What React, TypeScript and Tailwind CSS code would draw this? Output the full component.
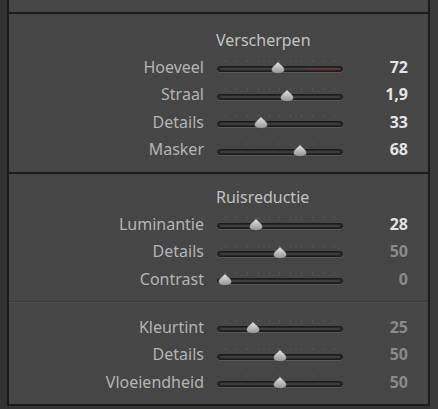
import React from 'react';

type Row = { label: string; value: string; frac: number; active: boolean; red?: boolean };

const sharpen: Row[] = [
  { label: 'Hoeveel', value: '72', frac: 0.48, active: true, red: true },
  { label: 'Straal', value: '1,9', frac: 0.56, active: true },
  { label: 'Details', value: '33', frac: 0.33, active: true },
  { label: 'Masker', value: '68', frac: 0.68, active: true },
];

const luminance: Row[] = [
  { label: 'Luminantie', value: '28', frac: 0.28, active: true },
  { label: 'Details', value: '50', frac: 0.5, active: false },
  { label: 'Contrast', value: '0', frac: 0, active: false },
];

const color: Row[] = [
  { label: 'Kleurtint', value: '25', frac: 0.25, active: false },
  { label: 'Details', value: '50', frac: 0.5, active: false },
  { label: 'Vloeiendheid', value: '50', frac: 0.5, active: false },
];

const Thumb = () => (
  <svg width="14" height="13" viewBox="0 0 14 13">
    <defs>
      <linearGradient id="thumbGrad" x1="0" y1="0" x2="0" y2="1">
        <stop offset="0" stopColor="#e8e8e8" />
        <stop offset="1" stopColor="#929292" />
      </linearGradient>
    </defs>
    <path
      d="M7 0.5 C8.2 2.8 13.5 5.3 13.5 8.6 C13.5 11.4 10.8 12.5 7 12.5 C3.2 12.5 0.5 11.4 0.5 8.6 C0.5 5.3 5.8 2.8 7 0.5 Z"
      fill="url(#thumbGrad)"
      stroke="#383838"
      strokeWidth="0.6"
    />
  </svg>
);

const Slider = ({ frac, red }: { frac: number; red?: boolean }) => (
  <div className="relative w-[126px] h-[15px]">
    {/* tick marks */}
    <div className="absolute left-[8px] right-[8px] top-[1px] flex justify-between">
      {[...Array(11)].map((_, i) => (
        <div key={i} className="w-px h-[2px] bg-[#565656]" />
      ))}
    </div>
    {/* groove */}
    <div className="absolute left-0 right-0 top-[7px] h-[6px] rounded-full bg-[#262626] border border-[#1c1c1c] shadow-[0_1px_0_#5a5a5a] overflow-hidden">
      <div className="absolute left-[2px] right-[2px] top-[1px] h-[2px] rounded-full bg-[#3d3d3d]" />
      {red && <div className="absolute right-[2px] top-[1px] w-[34px] h-[2px] rounded-full bg-[#5e3636]" />}
    </div>
    <div className="absolute top-[2px]" style={{ left: `${1 + frac * 110}px` }}>
      <Thumb />
    </div>
  </div>
);

const SliderRow = ({ row }: { row: Row }) => (
  <div className="h-[27.5px] flex items-center">
    <div className="w-[195px] text-right text-[16px] text-[#b4b4b4] leading-none">{row.label}</div>
    <div className="w-[13px]" />
    <Slider frac={row.frac} red={row.red} />
    <div
      className={
        'w-[65px] text-right text-[16px] leading-none font-bold ' +
        (row.active ? 'text-[#e4e4e4]' : 'text-[#8a8a8a]')
      }
    >
      {row.value}
    </div>
  </div>
);

const Title = ({ children }: { children: React.ReactNode }) => (
  <div className="h-[27px] flex items-center pl-[207px] text-[16px] text-[#c2c2c2] leading-none">
    {children}
  </div>
);

export default function App() {
  return (
    <div
      className="w-[438px] h-[409px] bg-[#333333] flex overflow-hidden"
      style={{ fontFamily: '"Noto Sans", "Open Sans", sans-serif' }}
    >
      <div className="ml-[7px] w-[423px] h-[406px] flex flex-col border-l-2 border-r-2 border-b-2 border-[#1b1b1b] bg-[#464646]">
        <div className="h-[12px] shrink-0" />
        <div className="h-[2px] shrink-0 bg-[#1b1b1b]" />
        <section className="pt-[12px] pb-[8px] h-[158px] shrink-0">
          <Title>Verscherpen</Title>
          {sharpen.map((r, i) => (
            <SliderRow key={i} row={r} />
          ))}
        </section>
        <div className="h-[2px] shrink-0 bg-[#1b1b1b]" />
        <section className="pt-[9px] h-[127px] shrink-0">
          <Title>Ruisreductie</Title>
          {luminance.map((r, i) => (
            <SliderRow key={i} row={r} />
          ))}
        </section>
        <div className="h-px shrink-0 bg-[#3a3a3a]" />
        <div className="h-px shrink-0 bg-[#4e4e4e]" />
        <section className="pt-[10px] flex-1">
          {color.map((r, i) => (
            <SliderRow key={i} row={r} />
          ))}
        </section>
      </div>
      <div className="flex-1 bg-[#3b3b3b]" />
    </div>
  );
}
